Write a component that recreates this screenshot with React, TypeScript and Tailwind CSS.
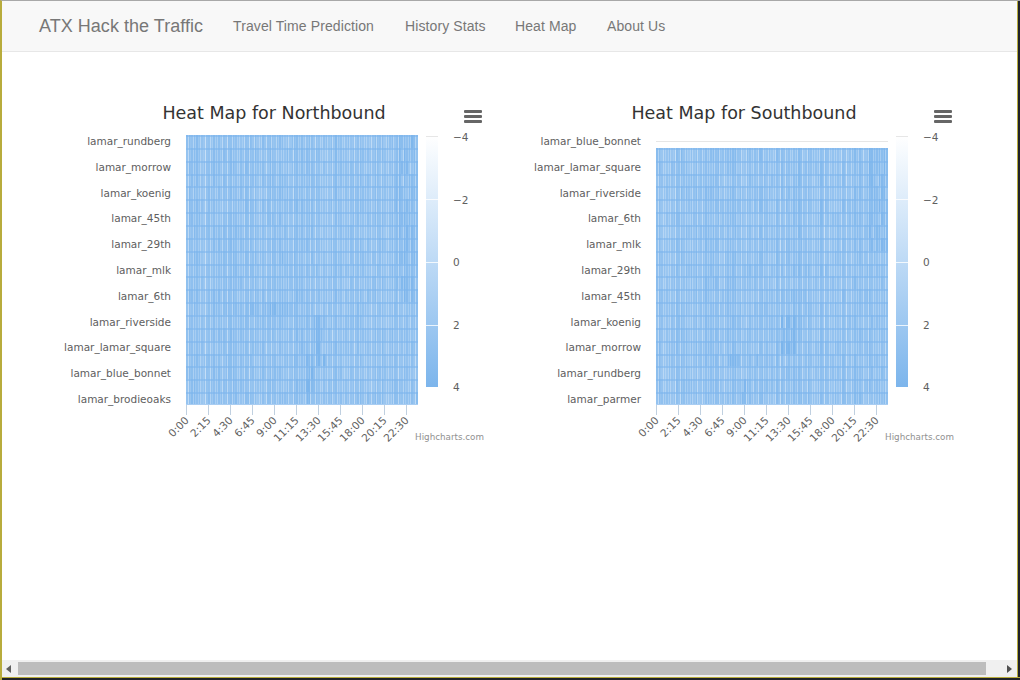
const BASE = [124, 181, 236];

function hash(a: number, b: number) {
  let h = (Math.imul(a + 1, 374761393) + Math.imul(b + 1, 668265263)) | 0;
  h = Math.imul(h ^ (h >>> 13), 1274126177);
  h = h ^ (h >>> 16);
  return (h >>> 0) / 4294967296;
}

type Hot = { x0: number; x1: number; y0: number; y1: number; t: number };

function cellColor(t: number) {
  const c = BASE.map((v) => Math.round(255 + (v - 255) * t));
  return `rgb(${c[0]},${c[1]},${c[2]})`;
}

function HeatSvg({ rows, seed, hots }: { rows: number; seed: number; hots: Hot[] }) {
  const cw = 232 / 95;
  const h = 270 / 21;
  const cells: React.ReactNode[] = [];
  const top = (21 - rows) * h;
  for (let r = 0; r < rows; r++) {
    const py = top + r * h;
    const y0 = Math.round(py);
    const y1 = Math.round(py + h);
    for (let x = 0; x < 232; x++) {
      const c = Math.floor(x / cw);
      const boundary = (c + 1) * cw;
      const f = boundary - x;
      const seam = f < 1 ? 1 - Math.abs(2 * f - 1) : 0;
      const n = hash(c + seed, r) * 0.5 + hash(c + seed, 999) * 0.5;
      let t = 0.74 + n * 0.2 - seam * 0.36;
      for (const s of hots) {
        const inside = x >= s.x0 && x < s.x1 && py + h / 2 >= s.y0 && py + h / 2 < s.y1;
        if (inside && hash(c + seed, r + 500) < 0.85) t += s.t;
      }
      cells.push(<rect key={r + "-" + x} x={x} y={y0} width={1} height={y1 - y0} fill={cellColor(Math.min(t, 1))} shapeRendering="crispEdges" />);
    }
    cells.push(<rect key={"l" + r} x={0} y={y0} width={232} height={2} fill="#7cb5ec" opacity={0.55} shapeRendering="crispEdges" />);
  }
  return <g transform="translate(132 81)">{cells}<rect x={0} y={269} width={232} height={1} fill="#a9cdf2" /></g>;
}

const TICKS = ["0:00", "2:15", "4:30", "6:45", "9:00", "11:15", "13:30", "15:45", "18:00", "20:15", "22:30"];
const LEGEND: [string, number][] = [["−4", 83], ["−2", 146], ["0", 208], ["2", 271], ["4", 333]];

function Chart({ id, title, labels, rows, seed, hots, emptyTop }: { id: string; title: string; labels: string[]; rows: number; seed: number; hots: Hot[]; emptyTop?: boolean }) {
  const font = "'DejaVu Sans', sans-serif";
  return (
    <svg width="440" height="400" className="block shrink-0" style={{ fontFamily: font }}>
      <defs>
        <linearGradient id={id} x1="0" y1="0" x2="0" y2="1">
          <stop offset="0" stopColor="#ffffff" />
          <stop offset="1" stopColor="#7cb5ec" />
        </linearGradient>
      </defs>
      <text x="220" y="65" textAnchor="middle" fontSize="17.5" fill="#333333">{title}</text>
      <g fill="#666666">
        <rect x="410" y="56" width="18" height="3" rx="1" />
        <rect x="410" y="61" width="18" height="3" rx="1" />
        <rect x="410" y="66" width="18" height="3" rx="1" />
      </g>
      {labels.map((l, i) => (
        <text key={l} x="117" y={91 + i * 25.8} textAnchor="end" fontSize="10.5" fill="#606060">{l}</text>
      ))}
      {emptyTop && <rect x="132" y="87" width="232" height="1" fill="#e6e6e6" />}
      <HeatSvg rows={rows} seed={seed} hots={hots} />
      {TICKS.map((t, i) => {
        const x = 132.5 + i * 22;
        return (
          <g key={t}>
            <rect x={x - 0.5} y="351" width="1" height="10" fill="#c0d0e0" />
            <text x={x + 3} y="367" textAnchor="end" fontSize="10.5" fill="#606060" transform={`rotate(-45 ${x + 3} 367)`}>{t}</text>
          </g>
        );
      })}
      <rect x="372" y="81" width="12" height="252" fill={`url(#${id})`} />
      <rect x="372" y="82" width="12" height="1" fill="#e6e6e6" />
      {[145, 208, 271].map((y) => <rect key={y} x="372" y={y} width="12" height="1" fill="#ffffff" opacity="0.8" />)}
      <rect x="372" y="333" width="12" height="1" fill="#ffffff" />
      {LEGEND.map(([l, y]) => (
        <text key={l} x="399" y={y + 4} fontSize="10.5" fill="#606060">{l}</text>
      ))}
      <text x="430" y="386" textAnchor="end" fontSize="8.75" fill="#909090">Highcharts.com</text>
    </svg>
  );
}

const NORTH = ["lamar_rundberg", "lamar_morrow", "lamar_koenig", "lamar_45th", "lamar_29th", "lamar_mlk", "lamar_6th", "lamar_riverside", "lamar_lamar_square", "lamar_blue_bonnet", "lamar_brodieoaks"];
const SOUTH = ["lamar_blue_bonnet", "lamar_lamar_square", "lamar_riverside", "lamar_6th", "lamar_mlk", "lamar_29th", "lamar_45th", "lamar_koenig", "lamar_morrow", "lamar_rundberg", "lamar_parmer"];

const HOT_N: Hot[] = [
  { x0: 128, x1: 140, y0: 180, y1: 232, t: 0.14 },
  { x0: 120, x1: 130, y0: 218, y1: 262, t: 0.1 },
  { x0: 210, x1: 230, y0: 0, y1: 165, t: 0.09 },
  { x0: 60, x1: 110, y0: 164, y1: 180, t: 0.07 },
  { x0: 94, x1: 98, y0: 115, y1: 128, t: 0.12 },
  { x0: 121, x1: 124, y0: 246, y1: 270, t: 0.14 },
];
const HOT_S: Hot[] = [
  { x0: 124, x1: 140, y0: 180, y1: 218, t: 0.14 },
  { x0: 134, x1: 150, y0: 150, y1: 168, t: 0.09 },
  { x0: 72, x1: 84, y0: 218, y1: 232, t: 0.14 },
  { x0: 85, x1: 90, y0: 244, y1: 270, t: 0.16 },
  { x0: 212, x1: 232, y0: 0, y1: 120, t: 0.08 },
  { x0: 100, x1: 105, y0: 218, y1: 232, t: 0.12 },
];

const NAV: [string, string][] = [
  ["Travel Time Prediction", "w-[172px]"],
  ["History Stats", "w-[110px]"],
  ["Heat Map", "w-[92px]"],
  ["About Us", "w-[88px]"],
];

export default function App() {
  return (
    <div className="relative flex h-[680px] w-[1020px] flex-col overflow-hidden border-t border-l-2 border-t-[#a8a8a8] border-l-[#b8ac3c] bg-white font-['Liberation_Sans',sans-serif]">
      <nav className="flex h-[51px] shrink-0 items-center border-b border-[#e7e7e7] bg-[#f8f8f8] pl-[37px] text-[#777777]">
        <span className="w-[179px] text-[18px] tracking-[0.03px]">ATX Hack the Traffic</span>
        <span className="flex pl-[15px] text-[14px] tracking-[0.1px]">
          {NAV.map(([n, w]) => <span key={n} className={w + " whitespace-nowrap"}>{n}</span>)}
        </span>
      </nav>
      <main className="flex flex-1 gap-[30px] pl-[52px] pt-[2px]">
        <Chart id="g1" title="Heat Map for Northbound" labels={NORTH} rows={21} seed={3} hots={HOT_N} />
        <Chart id="g2" title="Heat Map for Southbound" labels={SOUTH} rows={20} seed={211} hots={HOT_S} emptyTop />
      </main>
      <div className="absolute bottom-[3px] left-0 right-[3px] flex h-[17px] items-center bg-[#f0f0f0]">
        <span className="ml-[4px] h-0 w-0 border-y-[4px] border-r-[5px] border-y-transparent border-r-[#606060]" />
        <span className="ml-[7px] h-[13px] w-[968px] bg-[#bdbdbd]" />
        <span className="ml-auto mr-[5px] h-0 w-0 border-y-[4px] border-l-[5px] border-y-transparent border-l-[#505050]" />
      </div>
      <div className="absolute inset-y-0 right-0 w-[3px] border-l border-[#b8ac3c] bg-[#20222a]" />
      <div className="absolute inset-x-0 bottom-0 h-[3px] border-t border-[#b8ac3c] bg-[#20222a]" />
    </div>
  );
}
